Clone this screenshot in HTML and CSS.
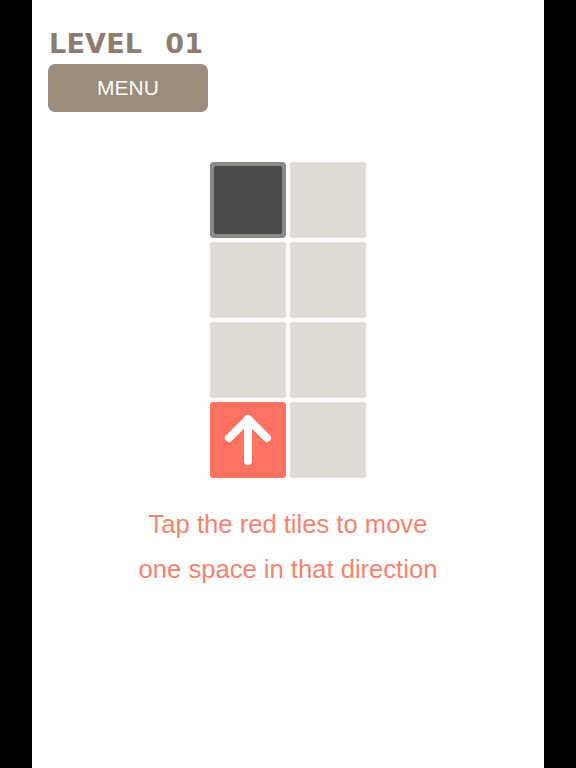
FILE: index.html
```html
<!DOCTYPE html>
<html>
<head>
<meta charset="utf-8">
<link rel="stylesheet" href="styles.css">
</head>
<body>
<div class="panel">
  <div class="header">
    <div class="level">LEVEL<span class="num">01</span></div>
    <button class="menu">MENU</button>
  </div>
  <div class="board">
    <div class="tile player"><div class="core"></div></div>
    <div class="tile"></div>
    <div class="tile"></div>
    <div class="tile"></div>
    <div class="tile"></div>
    <div class="tile"></div>
    <div class="tile red">
      <svg width="76" height="76" viewBox="0 0 76 76">
        <path d="M38 59 V17 M19 36 L38 17 L57 36" fill="none" stroke="#fff" stroke-width="8" stroke-linecap="round" stroke-linejoin="round"/>
      </svg>
    </div>
    <div class="tile"></div>
  </div>
  <div class="hint">
    <p>Tap the red tiles to move</p>
    <p>one space in that direction</p>
  </div>
</div>
</body>
</html>
```
FILE: styles.css
```css
html, body {
  margin: 0;
  padding: 0;
  background: #000;
}
.panel {
  width: 512px;
  height: 768px;
  margin-left: 32px;
  background: #fff;
  display: flex;
  flex-direction: column;
  align-items: center;
  font-family: "Liberation Sans", Arial, sans-serif;
}
.header {
  align-self: flex-start;
  padding: 28px 0 0 16px;
  display: flex;
  flex-direction: column;
}
.level {
  font-family: "DejaVu Sans", sans-serif;
  font-weight: bold;
  font-size: 27px;
  line-height: 32px;
  color: #8c7d70;
  letter-spacing: 0.2px;
  padding-left: 1px;
  height: 36px;
}
.level .num {
  margin-left: 23px;
}
.menu {
  width: 160px;
  height: 48px;
  border: none;
  border-radius: 7px;
  background: #9c8c7c;
  color: #fff;
  font-family: "Liberation Sans", Arial, sans-serif;
  font-size: 21px;
  padding: 0;
}
.board {
  margin-top: 50px;
  display: grid;
  grid-template-columns: 76px 76px;
  grid-auto-rows: 76px;
  gap: 4px;
}
.tile {
  background: #e0dad4;
  border-radius: 3px;
}
.tile.player {
  background: #8c8a87;
  padding: 4px;
  box-sizing: border-box;
  border-radius: 4px;
}
.tile.player .core {
  width: 100%;
  height: 100%;
  background: #4c4b49;
  border-radius: 2px;
}
.tile.red {
  background: #ff7260;
}
.tile.red svg {
  display: block;
}
.hint {
  margin-top: 24px;
  text-align: center;
  color: #f6836e;
  font-size: 25.6px;
}
.hint p {
  margin: 0;
  line-height: 45px;
}
```
